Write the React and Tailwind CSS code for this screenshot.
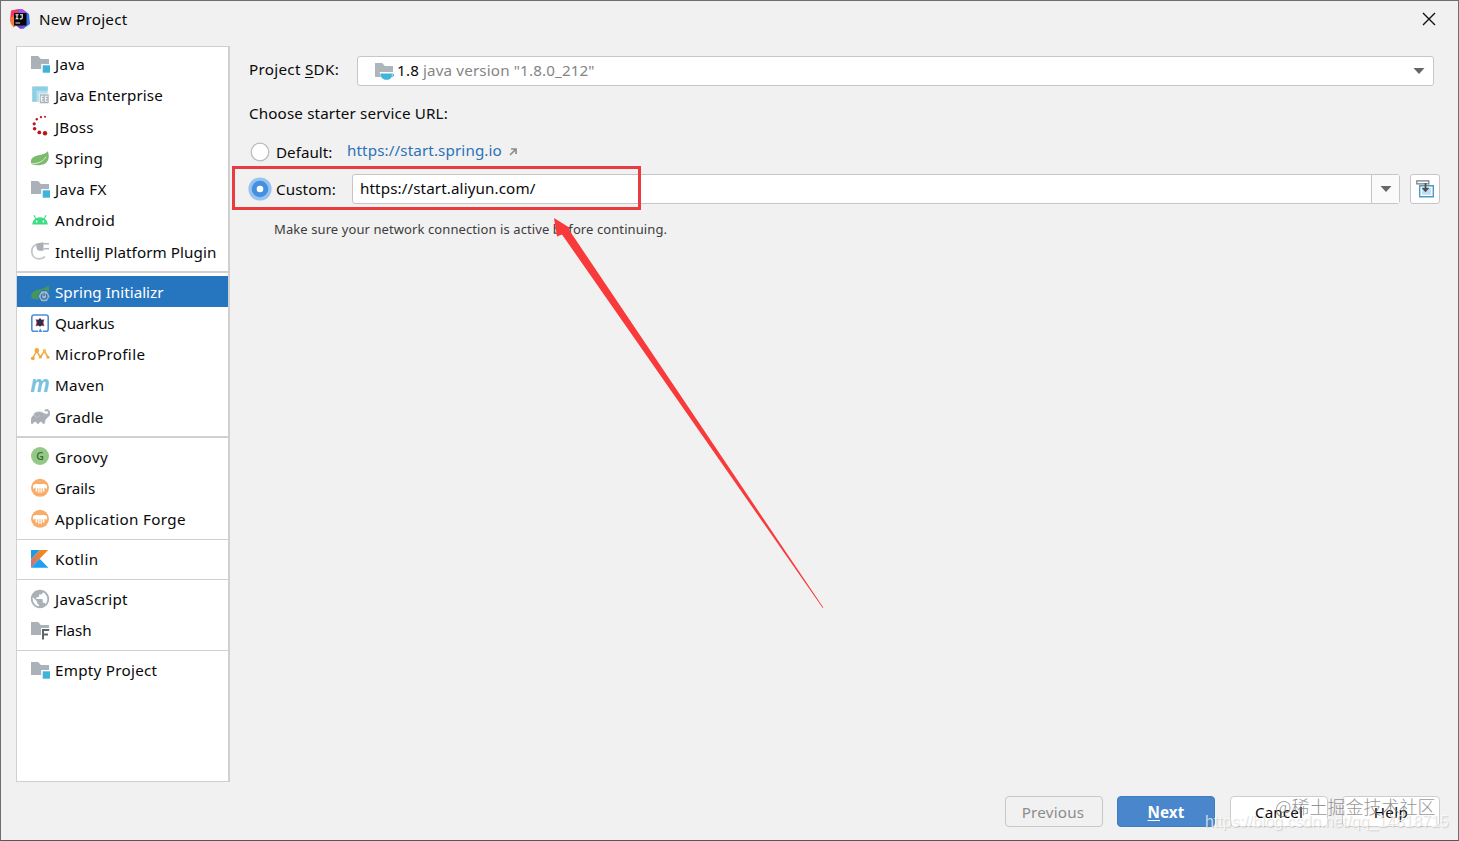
import { useState } from 'react';
import { SiGradle } from 'react-icons/si';
import { MdPublic } from 'react-icons/md';

// shared 20x20 icon canvas
function Icon({ children }) {
  return (
    <svg viewBox="0 0 20 20" className="h-5 w-5 shrink-0 overflow-visible">
      {children}
    </svg>
  );
}

function Folder() {
  return <path d="M1 2h7.2l2.6 3H19v10H1z" fill="#aab1b9" />;
}

function ModuleIcon() {
  return (
    <Icon>
      <Folder />
      <path d="M11.2 10h8.8v9h-8.8z" fill="#fff" />
      <path d="M12.7 11.3h7.3v7.4h-7.3z" fill="#40b3dc" />
    </Icon>
  );
}

function EnterpriseIcon() {
  return (
    <Icon>
      <path d="M2.3 1.6h15.4v15.2H2.3z" fill="#b4dfec" />
      <path d="M2.3 1.6h15.4v4.2H2.3zM2.3 5.8h4.2v11H2.3z" fill="#8fcfe4" />
      <path d="M9 8.6h10.2v10H9z" fill="#fff" />
      <path d="M9.7 9.3h9v9h-9z" fill="#aab3ba" />
      <path d="M13.6 11.2h-2.3v5h2.3M11.3 13.7h2M17.6 11.2h-2.3v5h2.3M15.3 13.7h2" stroke="#fff" strokeWidth="1" fill="none" />
    </Icon>
  );
}

function JBossIcon() {
  const dots = [[15, 0.8, 1], [11, 1.2, 1.1], [6.8, 3.2, 1.2], [4.2, 7.8, 1.6], [4.6, 12.8, 1.8], [9.3, 16.4, 1.9], [15, 17.3, 2.2]];
  return (
    <Icon>
      {dots.map(([x, y, r]) => (
        <circle key={x + '-' + y} cx={x} cy={y} r={r} fill="#b8161c" />
      ))}
    </Icon>
  );
}

function SpringIcon() {
  return (
    <Icon>
      <path d="M17.8 3.2c1.8 5 1.1 9.7-2.2 12-3.6 2.4-8.9 2.2-12.4 1.6-2.6-.7-2.9-4-1.3-6.2C5.3 6 13.8 8 17.8 3.2z" fill="#7dbb6c" />
      <path d="M2.5 15.6c6.2.2 11-2.6 13.5-6.8" stroke="#dff0da" strokeWidth="1" fill="none" />
    </Icon>
  );
}

function AndroidIcon() {
  return (
    <Icon>
      <path d="M2.3 14.5C2.5 10.3 5.8 7.3 10 7.3s7.5 3 7.7 7.2z" fill="#3ddc84" />
      <path d="M5.8 8.8 4 5.3M14.2 8.8 16 5.3" stroke="#3ddc84" strokeWidth="1.1" />
      <circle cx="6.6" cy="11.5" r="0.9" fill="#fff" />
      <circle cx="13.4" cy="11.5" r="0.9" fill="#fff" />
    </Icon>
  );
}

function PluginIcon() {
  return (
    <Icon>
      <path d="M7 2.3C3 3.5 1.6 6.8 1.8 10c.3 4 3.2 6.8 7 6.8 2.5 0 4.7-.6 6-2.3" stroke="#c3c7cb" strokeWidth="1.8" fill="none" />
      <path d="M6.5 1.5 13.5.2v8.6H10c-2.5 0-3.5-1.7-3.5-3.8z" fill="#a9afb5" />
      <path d="M13.5 1.7H19M13.5 6.8H19" stroke="#b3b8bd" strokeWidth="1.5" />
    </Icon>
  );
}

function InitializrIcon() {
  return (
    <Icon>
      <path d="M18.5 3c.8 3 .6 6 0 8.5L9 17.3c-3 .2-6-.3-6.9-.7-1.3-1.8-1.3-4.1.4-6C6 6.500 13.500 8.500 18.500 3z" fill="#43975c" />
      <path d="M11.2 8.3h5.9l3.4 5.9-3.4 5.9h-5.9l-3.400-5.900z" fill="#2675bf" />
      <path d="M11.5 9.2h5.2l2.9 5-2.9 5h-5.2l-2.9-5z" fill="#9fb6cc" />
      <path d="M12.4 12.2a2.8 2.8 0 1 0 3.5 0M14.1 10.9v3.1" stroke="#2c6ba8" strokeWidth="1.2" fill="none" />
    </Icon>
  );
}

function QuarkusIcon() {
  return (
    <Icon>
      <path d="M8 18.2H3.8a2 2 0 0 1-2-2V4a2 2 0 0 1 2-2h12.4a2 2 0 0 1 2 2v12.2a2 2 0 0 1-2 2h-3.4" stroke="#4a90d9" strokeWidth="1.6" fill="#fff" />
      <path d="m8.3 18.9 2-3.4 2 3.4z" fill="#4a90d9" />
      <path d="m5.5 6.2 4.5.8 4.5-.8-1 3.6 1 3.5-4.5-.6-4.5.6 1-3.5z" fill="#d9455c" />
      <path d="m10 4.8 1.3 2 2.3.3-.9 2.5.9 2.4-2.3.2-1.3 1.7-1.3-1.7-2.3-.2.9-2.4-.9-2.5 2.3-.3z" fill="#26314d" />
    </Icon>
  );
}

function MicroProfileIcon() {
  return (
    <Icon>
      <path d="M2.8 14.2 6.6 7l3.8 6.2 4-6.2 3.6 6.5" stroke="#f0b04c" strokeWidth="1.6" fill="none" strokeLinejoin="round" />
      <circle cx="2.8" cy="14.3" r="1.9" fill="#f0a93c" />
      <circle cx="6.8" cy="6.4" r="2.3" fill="#f0a93c" />
      <circle cx="10.4" cy="13" r="1.6" fill="#f0a93c" />
      <circle cx="14.4" cy="6.8" r="1.7" fill="#f3b75c" />
      <circle cx="18" cy="13.3" r="1.5" fill="#f0a93c" />
    </Icon>
  );
}

function MavenIcon() {
  return (
    <Icon>
      <text x="0.2" y="16" fontSize="24" fontWeight="700" fontStyle="italic" fontFamily="Open Sans" textLength="19.5" lengthAdjust="spacingAndGlyphs" fill="#78c3de">m</text>
    </Icon>
  );
}

function GradleIcon() {
  return (
    <span className="flex h-5 w-5 shrink-0 items-center justify-center pb-px">
      <SiGradle size={19} color="#a9afb4" strokeWidth={0.8} stroke="#a9afb4" className="shrink-0" />
    </span>
  );
}

function GroovyIcon() {
  return (
    <Icon>
      <circle cx="10" cy="9" r="9" fill="#94c985" />
      <text x="10" y="12.7" fontSize="10.5" fontWeight="600" textAnchor="middle" fontFamily="Open Sans" fill="#41643a">G</text>
    </Icon>
  );
}

function GrailsIcon() {
  return (
    <Icon>
      <circle cx="10" cy="9.8" r="9" fill="#f7ae6c" />
      <path d="M3 7.4C4.8 5.6 7 6.2 10 6.2s5.2-.6 7 1.2v3h-1.6V9.8h-1v3.6h-1.6V10.2h-1v4.6h-1.300v-4.600H9.500v4.600H8.200v-4.600h-1v3.200H5.600V9.800h-1v.6H3z" fill="#fff" />
    </Icon>
  );
}

function KotlinIcon() {
  return (
    <Icon>
      <defs>
        <linearGradient id="kt" x1="0" y1="1" x2="1" y2="0">
          <stop offset="0" stopColor="#b96ea3" />
          <stop offset="0.5" stopColor="#e8813a" />
          <stop offset="1" stopColor="#f38a12" />
        </linearGradient>
      </defs>
      <path d="M1 1h9L1 10.5z" fill="#1c9be8" />
      <path d="M10 1h8.2L1 18.7V10.5z" fill="url(#kt)" />
      <path d="m1 18.7 8.7-9 8.7 9z" fill="#1ca1f2" />
    </Icon>
  );
}

function GlobeIcon() {
  return (
    <span className="flex h-5 w-5 shrink-0 items-center justify-center">
      <MdPublic size={22} color="#a9b0b6" className="shrink-0" />
    </span>
  );
}

function FlashIcon() {
  return (
    <Icon>
      <Folder />
      <path d="M11 8h9v12h-9z" fill="#fff" />
      <path d="M13 19.5V10.1h6.2M13 14.6h5" stroke="#5f6468" strokeWidth="2" fill="none" />
    </Icon>
  );
}

function JdkIcon() {
  return (
    <Icon>
      <path d="M0 2h7.2l2.6 3H18v11H0z" fill="#aeb5bb" />
      <path d="M4.5 11h15v7h-13z" fill="#fff" />
      <path d="M5.5 12.4h11.7c2.7 0 2.5 3.6-.7 3.5-1.3 2.4-2.5 2.8-5 2.8-3.5 0-6-2.3-6-6.3z" fill="#41b4d8" />
      <circle cx="17.3" cy="14.1" r="0.7" fill="#fff" />
    </Icon>
  );
}

function IdeaLogo() {
  return (
    <svg viewBox="0 0 20 20" className="mt-px h-5 w-5 shrink-0">
      <path d="M1 1.5 8.5 0 12 3 5 14 0 12z" fill="#f0386b" />
      <path d="m0 9 4-2 3 9-3.5 2.5L.5 14z" fill="#f5793b" />
      <path d="M8 1 13 .5 19 5l1 10-7 5-3.5-1z" fill="#3d6fe8" />
      <path d="m4 15 6-2 4 5-3.5 2z" fill="#7b3fd0" />
      <path d="M8 0h4l5 4-6 3z" fill="#b44be0" />
      <path d="M4 4h12.5v12.5H4z" fill="#080808" />
      <path d="M5.5 5.8h3M7 5.8v4M5.5 9.8h3M10 5.8h3M12.2 5.8V9q0 .9-1 .9H9.8" stroke="#fff" strokeWidth="1.1" fill="none" />
      <path d="M5.5 14h4.6" stroke="#fff" strokeWidth="0.9" />
    </svg>
  );
}

const groups = [
  {
    box: 'h-[226px] border-b-2 pt-[1.2px]',
    items: [
      { name: 'Java', icon: ModuleIcon, cls: 'tracking-[0.3px]' },
      { name: 'Java Enterprise', icon: EnterpriseIcon, cls: 'tracking-[0.1px]' },
      { name: 'JBoss', icon: JBossIcon, cls: 'pt-px tracking-[0.2px]' },
      { name: 'Spring', icon: SpringIcon, cls: 'tracking-[0.25px]' },
      { name: 'Java FX', icon: ModuleIcon, cls: 'tracking-[0.3px]' },
      { name: 'Android', icon: AndroidIcon, cls: 'tracking-[0.5px]' },
      { name: 'IntelliJ Platform Plugin', icon: PluginIcon, cls: 'tracking-[0.08px]' },
    ],
  },
  {
    box: 'h-[165px] border-b-2 pt-[3px]',
    items: [
      { name: 'Spring Initializr', icon: InitializrIcon, cls: 'tracking-[0.02px]' },
      { name: 'Quarkus', icon: QuarkusIcon, cls: 'tracking-[-0.2px]' },
      { name: 'MicroProfile', icon: MicroProfileIcon, cls: 'tracking-[0.35px]' },
      { name: 'Maven', icon: MavenIcon, cls: 'pb-px tracking-[0.3px]' },
      { name: 'Gradle', icon: GradleIcon, cls: 'tracking-[0.2px]' },
    ],
  },
  {
    box: 'h-[102px] border-b pt-[3px]',
    items: [
      { name: 'Groovy', icon: GroovyIcon, cls: 'tracking-[0.45px]' },
      { name: 'Grails', icon: GrailsIcon, cls: 'tracking-[-0.1px]' },
      { name: 'Application Forge', icon: GrailsIcon, cls: 'tracking-[0.34px]' },
    ],
  },
  {
    box: 'h-10 border-b pt-[3px]',
    items: [{ name: 'Kotlin', icon: KotlinIcon, cls: 'tracking-[0.35px]' }],
  },
  {
    box: 'h-[71px] border-b pt-[3px]',
    items: [
      { name: 'JavaScript', icon: GlobeIcon, cls: 'tracking-[0.34px]' },
      { name: 'Flash', icon: FlashIcon, cls: 'tracking-[-0.1px]' },
    ],
  },
  {
    box: 'pt-[3px]',
    items: [{ name: 'Empty Project', icon: ModuleIcon, cls: 'tracking-[0.27px]' }],
  },
];

function Sidebar({ selected, onSelect }) {
  return (
    <div className="h-[736px] w-[214px] shrink-0 border border-r-2 border-[#d0d0d0] bg-white">
      {groups.map((group) => (
        <div key={group.items[0].name} className={`border-[#d0d0d0] ${group.box}`}>
          {group.items.map(({ name, icon: ItemIcon, cls }) => (
            <div
              key={name}
              onClick={() => onSelect(name)}
              className={`flex h-[31.3px] items-center gap-[5px] pl-[13px] ${name === selected ? 'bg-[#2675bf] text-white' : ''}`}
            >
              <ItemIcon />
              <span className={`whitespace-nowrap leading-5 ${cls}`}>{name}</span>
            </div>
          ))}
        </div>
      ))}
    </div>
  );
}

function Radio({ checked, onClick }) {
  return (
    <svg viewBox="0 0 24 24" className="h-6 w-6 shrink-0" onClick={onClick}>
      {checked ? (
        <>
          <circle cx="12" cy="12" r="11.6" fill="#97c3f0" />
          <circle cx="12" cy="12" r="8.3" fill="#4490df" />
          <circle cx="12" cy="12" r="3.3" fill="#fff" />
        </>
      ) : (
        <circle cx="12" cy="12" r="8.8" fill="#fff" stroke="#bdbdbd" strokeWidth="1.3" />
      )}
    </svg>
  );
}

function Caret() {
  return (
    <svg viewBox="0 0 12 6" className="h-[6px] w-3">
      <path d="M.5 0h11L6 6z" fill="#666" />
    </svg>
  );
}

export default function App() {
  const [selected, setSelected] = useState('Spring Initializr');
  const [source, setSource] = useState('custom');

  return (
    <div className="relative flex h-[841px] w-[1459px] flex-col overflow-hidden border border-[#6e6e6e] border-b-[#59565a] bg-[#f1f1f1] font-['Noto_Sans','Noto_Sans_CJK_SC',sans-serif] text-[15.2px] text-[#0a0a0a]">
      {/* title bar */}
      <div className="flex h-[45px] shrink-0 items-start pl-[9px] pr-[22px] pt-[7px]">
        <IdeaLogo />
        <span className="pl-[9px] leading-[22px] tracking-[0.3px]">New Project</span>
        <svg viewBox="0 0 14 14" className="ml-auto mt-1 h-[14px] w-[14px]">
          <path d="m1 1 12 12M13 1 1 13" stroke="#111" strokeWidth="1.4" />
        </svg>
      </div>

      <div className="flex pl-[15px]">
        <Sidebar selected={selected} onSelect={setSelected} />

        <div className="flex min-w-0 flex-1 flex-col pl-[19px] pr-[18px] pt-[10px]">
          {/* project sdk */}
          <div className="flex h-[30px] items-center pr-[6px]">
            <span className="w-[108px] pb-[3px] tracking-[0.3px]">
              Project <span className="underline underline-offset-2">S</span>DK:
            </span>
            <div className="flex h-[30px] flex-1 items-center rounded-[3px] border border-[#c6c6c6] bg-white pl-[17px] pr-2">
              <JdkIcon />
              <span className="pb-px pl-[2px] tracking-[0.2px]">1.8</span>
              <span className="pb-px pl-1 tracking-[0.14px] text-[#858585]">java version "1.8.0_212"</span>
              <span className="ml-auto"><Caret /></span>
            </div>
          </div>

          <div className="mt-[16px] leading-[22px] tracking-[0.14px]">Choose starter service URL:</div>

          <div className="mt-4 flex h-6 items-center">
            <span className="-ml-px flex"><Radio checked={source === 'default'} onClick={() => setSource('default')} /></span>
            <span className="w-[75px] pl-1 pt-px">Default:</span>
            <span className="pb-[3px] tracking-[0.12px] text-[#2b72b8]">https://start.spring.io</span>
            <svg viewBox="0 0 8 8" className="mb-px ml-[7px] h-2 w-2">
              <path d="M1 7 6.5 1.5M2 1h5v5" stroke="#8c8c8c" strokeWidth="1.7" fill="none" />
            </svg>
          </div>

          <div className="mt-[10px] flex h-[30px] items-center">
            <span className="-ml-px flex"><Radio checked={source === 'custom'} onClick={() => setSource('custom')} /></span>
            <span className="w-[80px] pl-1 pt-px tracking-[0.1px]">Custom:</span>
            <div className="flex h-[30px] flex-1 items-center rounded-[3px] border border-[#c6c6c6] bg-white">
              <span className="pb-px pl-[7px] tracking-[0.11px]">https://start.aliyun.com/</span>
              <span className="ml-auto flex h-full w-7 items-center justify-center border-l border-[#c6c6c6] bg-[#fafafa]"><Caret /></span>
            </div>
            <div className="ml-[10px] flex h-[30px] w-[30px] items-center justify-center rounded-[3px] border border-[#c6c6c6] bg-white">
              <svg viewBox="0 0 20 20" className="h-5 w-5">
                <path d="M4.7 6.8h13.6v11H4.7z" fill="#fff" stroke="#4a9bc8" strokeWidth="1.4" />
                <path d="M6.8 9h9.4v6.8H6.8z" fill="#bfdff0" />
                <path d="M1.8 1.8h12v3h-12z" fill="#fff" stroke="#737b80" strokeWidth="1.2" />
                <path d="M10.5 4v6" stroke="#4d4d4d" strokeWidth="1.7" />
                <path d="M6.5 8.8h8l-4 4.5z" fill="#4d4d4d" />
              </svg>
            </div>
          </div>

          <div className="mt-[15px] pl-[25px] text-[13px] leading-5 tracking-[0.09px] text-[#3c3c3c]">
            Make sure your network connection is active before continuing.
          </div>
        </div>
      </div>

      {/* footer buttons */}
      <div className="mt-[14px] flex justify-end pr-[18px] text-center leading-[30px]">
        <button className="mr-[14px] h-[31px] w-[98px] rounded-[4px] border border-[#c8c8c8] pl-[5px] pr-[7px] tracking-[0.2px] text-[#8c8c8c]">Previous</button>
        <button className="mr-[15px] h-[31px] w-[98px] rounded-[4px] border border-[#3f7dc0] bg-[#4a86cc] font-bold tracking-[0.1px] text-white">
          <span className="underline underline-offset-2">N</span>ext
        </button>
        <button className="mr-[14px] h-[31px] w-[98px] rounded-[4px] border border-[#cdcdcd] bg-white tracking-[0.15px]">Cancel</button>
        <button className="h-[31px] w-[98px] rounded-[4px] border border-[#cdcdcd] bg-white tracking-[0.4px]">Help</button>
      </div>

      {/* highlight box and arrow */}
      <div className="pointer-events-none absolute left-[231px] top-[165px] h-[44px] w-[409px] border-[3px] border-[#e93c41]" />
      <svg viewBox="0 0 280 400" className="pointer-events-none absolute left-[549px] top-[209px] h-[400px] w-[280px]">
        <path d="M4 8 20 18l-.5 2.5L273.3 397.5l-.6.5L12 24.5 7 26.5z" fill="#f93a3a" />
      </svg>

      {/* watermarks */}
      <div className="pointer-events-none absolute left-[1274px] top-[792px] whitespace-nowrap font-['Noto_Sans_CJK_SC',sans-serif] text-[18px] font-light leading-[26px] text-[#777]/80">@稀土掘金技术社区</div>
      <div className="pointer-events-none absolute left-[1204px] top-[810px] whitespace-nowrap font-['Liberation_Sans',sans-serif] text-[16px] leading-[22px] tracking-[-0.06px] text-white/70 [text-shadow:1px_1px_1px_rgba(130,130,130,0.3)]">https://blog.csdn.net/qq_14818715</div>
    </div>
  );
}
